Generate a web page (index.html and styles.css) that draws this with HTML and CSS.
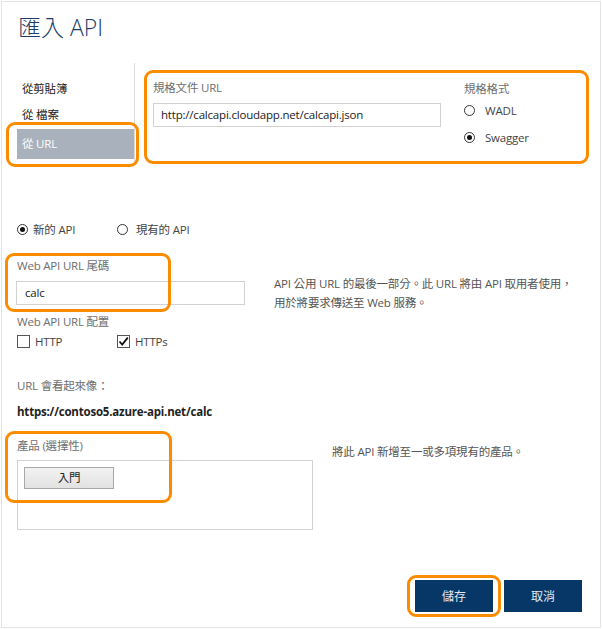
FILE: index.html
```html
<!DOCTYPE html>
<html lang="zh-Hant">
<head>
<meta charset="utf-8">
<title>匯入 API</title>
<link rel="stylesheet" href="styles.css">
</head>
<body>
<div class="frame">
  <h1 class="title">匯入 API</h1>

  <div class="source">
    <ul class="nav">
      <li class="nav-item">從剪貼簿</li>
      <li class="nav-item">從 檔案</li>
      <li class="nav-item active">從 URL</li>
    </ul>
    <div class="spec">
      <div class="spec-url">
        <div class="label">規格文件 URL</div>
        <div class="input spec-input">http://calcapi.cloudapp.net/calcapi.json</div>
      </div>
      <div class="spec-format">
        <div class="label">規格格式</div>
        <div class="format-row"><span class="radio"></span><span>WADL</span></div>
        <div class="format-row"><span class="radio checked"></span><span>Swagger</span></div>
      </div>
    </div>
  </div>

  <div class="api-type">
    <div class="option"><span class="radio checked"></span><span>新的 API</span></div>
    <div class="option"><span class="radio"></span><span class="opt-gap">現有的 API</span></div>
  </div>

  <div class="suffix-row">
    <div class="suffix-col">
      <div class="label">Web API URL 尾碼</div>
      <div class="input suffix-input">calc</div>
      <div class="label config-label">Web API URL 配置</div>
      <div class="checks">
        <div class="option"><span class="checkbox"></span><span>HTTP</span></div>
        <div class="option"><span class="checkbox checked"><svg viewBox="0 0 13 13" width="13" height="13"><path d="M2.5 6.5 L5.2 9.5 L10.8 2.6" fill="none" stroke="#111" stroke-width="1.8"/></svg></span><span>HTTPs</span></div>
      </div>
    </div>
    <p class="help help-suffix">API 公用 URL 的最後一部分。此 URL 將由 API 取用者使用，<br>用於將要求傳送至 Web 服務。</p>
  </div>

  <div class="label preview-label">URL 會看起來像：</div>
  <div class="preview-url">https://contoso5.azure-api.net/calc</div>

  <div class="label product-label">產品 (選擇性)</div>
  <div class="product-row">
    <div class="product-box">
      <span class="tag">入門</span>
    </div>
    <p class="help help-product">將此 API 新增至一或多項現有的產品。</p>
  </div>

  <div class="actions">
    <button class="btn">儲存</button>
    <button class="btn">取消</button>
  </div>

  <div class="hl hl-nav"></div>
  <div class="hl hl-spec"></div>
  <div class="hl hl-suffix"></div>
  <div class="hl hl-product"></div>
  <div class="hl hl-save"></div>
</div>
</body>
</html>
```

FILE: styles.css
```css
* { box-sizing: border-box; }

html, body {
  margin: 0;
  padding: 0;
  background: #ffffff;
}

body {
  font-family: "Open Sans", "Noto Sans CJK TC", sans-serif;
  font-size: 11.5px;
  letter-spacing: -0.2px;
  color: #333333;
}

.frame {
  position: relative;
  margin: 1px;
  width: 600px;
  height: 627px;
  border: 1px solid #e4e4e4;
}

.title {
  margin: 10px 0 0 16px;
  font-size: 23px;
  line-height: 30px;
  font-weight: 300;
  letter-spacing: 0;
  color: #1d3c6c;
}

/* source section */
.source {
  display: flex;
  margin-top: 21px;
}

.nav {
  list-style: none;
  margin: 0 0 0 15px;
  padding: 13px 0 6px 0;
  width: 118px;
  border-right: 1px solid #dcdcdc;
}

.nav-item {
  height: 26px;
  line-height: 26px;
  padding-left: 5px;
  color: #222;
}

.nav-item.active {
  margin-top: 1px;
  height: 30px;
  line-height: 30px;
  background: #a9b1bc;
  color: #ffffff;
}

.spec {
  display: flex;
  padding: 17px 0 0 18px;
  gap: 23px;
}

.label {
  line-height: 16px;
  color: #6e6e6e;
}

.input {
  border: 1px solid #d2d2d2;
  background: #fff;
  color: #222;
  padding-left: 7px;
}

.spec-input {
  margin-top: 7px;
  width: 288px;
  height: 24px;
  line-height: 22px;
}

.spec-format .label {
  margin-top: 1px;
}

.format-row {
  display: flex;
  align-items: center;
  height: 27px;
  color: #444;
}

.radio {
  display: inline-block;
  flex: none;
  width: 11px;
  height: 11px;
  border: 1px solid #333;
  border-radius: 50%;
  position: relative;
}

.radio.checked::after {
  content: "";
  position: absolute;
  left: 2px;
  top: 2px;
  width: 5px;
  height: 5px;
  border-radius: 50%;
  background: #111;
}

.format-row .radio {
  margin-right: 10px;
}

/* api type */
.api-type {
  display: flex;
  margin: 54px 0 0 15px;
  height: 20px;
}

.option {
  display: flex;
  align-items: center;
  width: 100px;
  color: #444;
}

.option .radio {
  margin-right: 5px;
}

.opt-gap {
  margin-left: 3px;
}

/* suffix */
.suffix-row {
  display: flex;
  margin: 19px 0 0 14px;
}

.suffix-col {
  width: 229px;
}

.suffix-col .label {
  padding-left: 1px;
}

.suffix-input {
  margin-top: 7px;
  height: 24px;
  line-height: 22px;
  padding-left: 8px;
  width: 229px;
}

.config-label {
  margin-top: 9px;
}

.checks {
  display: flex;
  margin: 2px 0 0 1px;
  height: 18px;
}

.checkbox {
  flex: none;
  display: inline-block;
  width: 13px;
  height: 13px;
  border: 1px solid #555;
  margin-right: 5px;
  position: relative;
}

.checkbox svg {
  position: absolute;
  left: -1px;
  top: -1px;
}

.help {
  margin: 0;
  color: #555;
  font-size: 11.5px;
}

.help-suffix {
  margin-left: 29px;
  padding-top: 16px;
  line-height: 19px;
}

.preview-label {
  margin: 28px 0 0 15px;
}

.preview-url {
  margin: 10px 0 0 15px;
  line-height: 16px;
  font-weight: 700;
  color: #222;
}

.product-label {
  margin: 18px 0 0 15px;
}

.product-row {
  display: flex;
  margin: 6px 0 0 15px;
}

.product-box {
  width: 296px;
  height: 70px;
  border: 1px solid #d2d2d2;
  padding: 6px;
}

.tag {
  display: block;
  width: 90px;
  height: 22px;
  line-height: 20px;
  text-align: center;
  border: 1px solid #a8a8a8;
  background: linear-gradient(#f2f2f2, #e2e2e2);
  color: #222;
}

.help-product {
  margin: -16px 0 0 19px;
  line-height: 16px;
}

.actions {
  display: flex;
  justify-content: flex-end;
  gap: 11px;
  margin: 50px 18px 0 0;
}

.btn {
  width: 78px;
  height: 32px;
  border: none;
  background: #063767;
  color: #e3e8ef;
  font-family: "Open Sans", "Noto Sans CJK TC", sans-serif;
  font-size: 12px;
  padding: 0;
}

/* orange annotation overlays */
.hl {
  position: absolute;
  border: 3px solid #fb8c00;
  border-radius: 9px;
  pointer-events: none;
}

.hl-nav { left: 4px; top: 120px; width: 133px; height: 45px; }
.hl-spec { left: 142px; top: 68px; width: 445px; height: 94px; }
.hl-suffix { left: 3px; top: 251px; width: 166px; height: 59px; }
.hl-product { left: 3px; top: 429px; width: 167px; height: 72px; }
.hl-save { left: 405px; top: 573px; width: 94px; height: 42px; }
```
